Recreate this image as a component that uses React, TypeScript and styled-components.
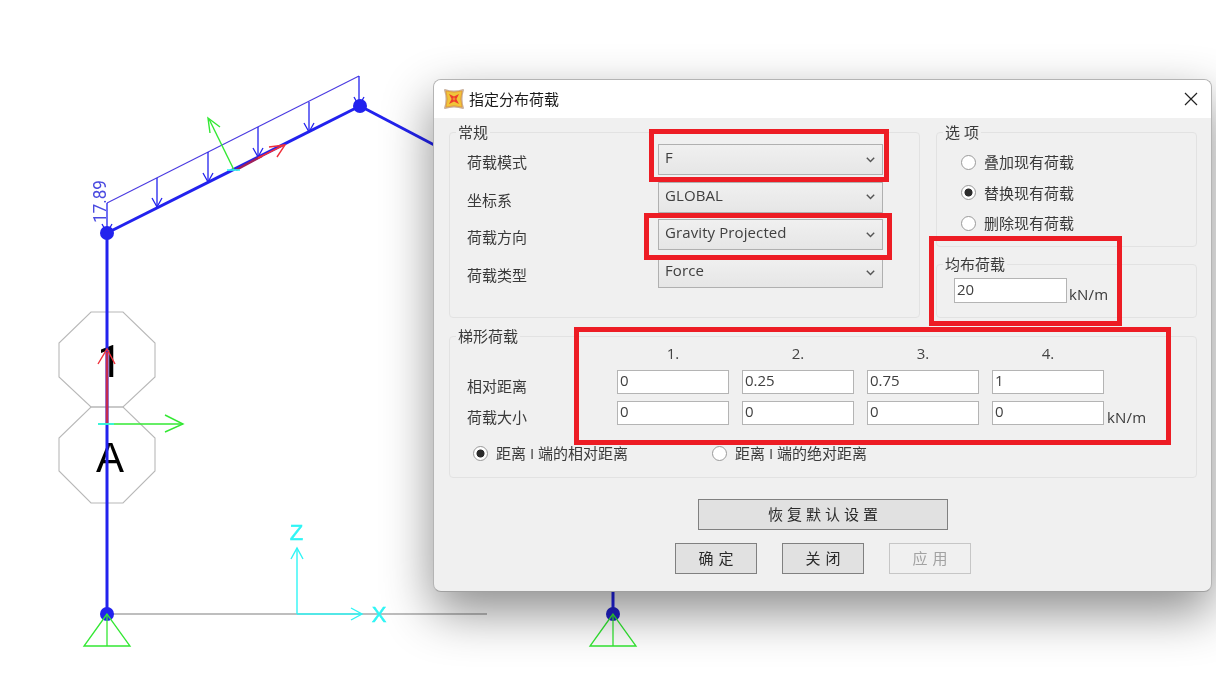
import React from "react";
import styled, { createGlobalStyle } from "styled-components";

const Global = createGlobalStyle`
  html, body { margin: 0; padding: 0; background: #fff; overflow: hidden; }
  * { box-sizing: border-box; }
`;

const Stage = styled.div`
  position: relative;
  width: 1216px;
  height: 675px;
  background: #fff;
  overflow: hidden;
  filter: blur(0.35px);
  font-family: "Open Sans", "Noto Sans CJK SC", sans-serif;
  font-size: 15px;
  color: #3a3a3a;
`;

const Drawing = styled.svg`
  position: absolute;
  inset: 0;
`;

const Dialog = styled.div`
  position: absolute;
  left: 433px;
  top: 79px;
  width: 779px;
  height: 513px;
  display: flex;
  flex-direction: column;
  background: #f0f0f0;
  border: 1px solid #b4b4b4;
  border-bottom-color: #a0a0a0;
  border-radius: 8px;
  overflow: hidden;
  box-shadow: 0 20px 50px rgba(0, 0, 0, 0.45);
`;

const TitleBar = styled.div`
  height: 38px;
  flex: none;
  display: flex;
  align-items: center;
  padding: 0 13px 0 10px;
  background: #fff;
`;

const DialogTitle = styled.span`
  margin: 0 0 2px 5px;
  color: #1a1a1a;
  font-size: 15px;
  flex: 1;
`;

const DialogBody = styled.div`
  flex: 1;
  padding: 14px 14px 0 15px;
  display: flex;
  flex-direction: column;
`;

const TopRow = styled.div`
  display: grid;
  grid-template-columns: 471px 261px;
  column-gap: 16px;
  height: 186px;
`;

const SideColumn = styled.div`
  display: flex;
  flex-direction: column;
  gap: 17px;
`;

const Group = styled.section<{ $height?: number; $grow?: boolean }>`
  border: 1px solid #e2e2e2;
  border-radius: 4px;
  ${(p) => (p.$height ? `height: ${p.$height}px; flex: none;` : "")}
  ${(p) => (p.$grow ? "flex: 1; min-height: 0;" : "")}
`;

const GroupTitle = styled.div`
  width: fit-content;
  height: 20px;
  margin: -11px 0 0 6px;
  padding: 0 2px;
  line-height: 20px;
  background: #f0f0f0;
  color: #3a3a3a;
  white-space: pre;
`;

const ComboGrid = styled.div`
  display: grid;
  grid-template-columns: 191px 225px;
  row-gap: 6.7px;
  padding: 2px 0 0 17px;
`;

const RowLabel = styled.div`
  height: 31px;
  line-height: 37px;
`;

const Combo = styled.div`
  height: 31px;
  display: flex;
  align-items: center;
  justify-content: space-between;
  padding: 0 7px 5px 6px;
  border: 1px solid #b0b0b0;
  background: linear-gradient(180deg, #f0f0f0, #e6e6e6);
  color: #404040;
  line-height: 20px;
  letter-spacing: 0.1px;
`;

const Chevron = styled.svg`
  width: 9px;
  height: 6px;
  margin-top: 5px;
  flex: none;
`;

const RadioList = styled.div`
  display: flex;
  flex-direction: column;
  gap: 10.5px;
  padding: 10px 0 0 24px;
`;

const RadioItem = styled.div<{ $width?: number }>`
  display: flex;
  align-items: center;
  gap: 8px;
  height: 20px;
  line-height: 20px;
  white-space: nowrap;
  ${(p) => (p.$width ? `width: ${p.$width}px;` : "")}
`;

const RadioDot = styled.span<{ $on?: boolean }>`
  width: 15px;
  height: 15px;
  flex: none;
  border-radius: 50%;
  border: 1px solid #9a9a9a;
  background: ${(p) => (p.$on ? "radial-gradient(circle, #2c2c2c 0 3.6px, #fff 4.4px)" : "#fff")};
`;

const UniformRow = styled.div`
  display: flex;
  padding: 4px 0 0 17px;
`;

const Field = styled.input<{ $w?: number; $h?: number }>`
  width: ${(p) => p.$w ?? 112}px;
  height: ${(p) => p.$h ?? 24}px;
  padding: 0 2px 4px;
  margin: 0;
  border: 1px solid #b4b4b4;
  border-radius: 0;
  background: #fff;
  color: #404040;
  font: inherit;
  outline: none;
`;

const Unit = styled.div`
  margin-left: 2px;
  line-height: 32px;
  height: 25px;
  white-space: nowrap;
  letter-spacing: 0.2px;
`;

const GridUnit = styled(Unit)`
  margin-left: -10px;
  height: 24px;
`;

const LowerGroupSpacer = styled.div`
  height: 18px;
  flex: none;
`;

const TrapGrid = styled.div`
  display: grid;
  grid-template-columns: 137px repeat(4, 112px) auto;
  column-gap: 13px;
  row-gap: 7px;
  padding-left: 17px;
`;

const ColumnHead = styled.div`
  height: 14px;
  margin-bottom: 3px;
  line-height: 14px;
  text-align: center;
  color: #444;
`;

const TrapLabel = styled.div`
  height: 24px;
  line-height: 32px;
`;

const RadioRow = styled.div`
  display: flex;
  padding: 18px 0 0 23px;
`;

const Footer = styled.div`
  display: flex;
  flex-direction: column;
  align-items: center;
  padding-top: 21px;
  gap: 13px;
`;

const ButtonRow = styled.div`
  display: flex;
  gap: 25px;
`;

const Button = styled.button<{ $wide?: boolean; $off?: boolean }>`
  width: ${(p) => (p.$wide ? 250 : 82)}px;
  height: 31px;
  padding: 0 0 2px;
  border: 1px solid ${(p) => (p.$off ? "#c6c6c6" : "#808080")};
  border-radius: 0;
  background: ${(p) => (p.$off ? "#f0f0f0" : "#e1e1e1")};
  color: ${(p) => (p.$off ? "#a2a2a2" : "#2a2a2a")};
  font: inherit;
  letter-spacing: ${(p) => (p.$wide ? 4 : 5)}px;
  text-indent: ${(p) => (p.$wide ? 4 : 5)}px;
`;

const Highlight = styled.div<{ $x: number; $y: number; $w: number; $h: number }>`
  position: absolute;
  left: ${(p) => p.$x}px;
  top: ${(p) => p.$y}px;
  width: ${(p) => p.$w}px;
  height: ${(p) => p.$h}px;
  border: 5px solid #ed1c24;
`;

const BLUE = "#2222ee";
const GREEN = "#33e833";
const CYAN = "#2ff5f5";
const RED = "#f0303a";

const LoadArrow = ({ x, top, bottom }: { x: number; top: number; bottom: number }) => (
  <g stroke={BLUE} fill="none" strokeWidth={1.3}>
    <line x1={x} y1={top} x2={x} y2={bottom} />
    <polyline points={`${x - 5},${bottom - 9} ${x},${bottom} ${x + 5},${bottom - 9}`} />
  </g>
);

const Support = ({ x }: { x: number }) => (
  <g stroke={GREEN} fill="none" strokeWidth={1.3}>
    <polygon points={`${x},614 ${x - 23},646 ${x + 23},646`} />
    <line x1={x} y1={614} x2={x} y2={646} />
  </g>
);

const Frame = () => (
  <Drawing width="1216" height="675" viewBox="0 0 1216 675">
    <line x1="107" y1="614" x2="487" y2="614" stroke="#a8a8a8" strokeWidth="1.5" />
    <g fill="none" stroke="#b8b8b8" strokeWidth="1.1">
      <polygon points="91,312 123,312 155,343 155,377 123,407 91,407 59,377 59,343" />
      <polygon points="91,407 123,407 155,438 155,471 123,503 91,503 59,471 59,438" />
    </g>
    <text x="110" y="377" fontFamily="Roboto" fontSize="45" textAnchor="middle" fill="#000">1</text>
    <text x="110" y="472" fontFamily="Liberation Sans" fontSize="42" textAnchor="middle" fill="#000">A</text>

    <g stroke={BLUE} strokeWidth="3" fill="none">
      <line x1="107" y1="233" x2="107" y2="614" />
      <line x1="107" y1="233" x2="360" y2="106" />
      <line x1="360" y1="106" x2="440" y2="148" />
      <line x1="613" y1="590" x2="613" y2="614" />
    </g>
    <line x1="107" y1="203" x2="359" y2="76" stroke="#4a3ae0" strokeWidth="1.1" />
    <LoadArrow x={107} top={203} bottom={233} />
    <LoadArrow x={157} top={178} bottom={207} />
    <LoadArrow x={208} top={152} bottom={182} />
    <LoadArrow x={258} top={127} bottom={157} />
    <LoadArrow x={309} top={102} bottom={132} />
    <LoadArrow x={359} top={76} bottom={106} />
    <text
      transform="translate(105.5 223) rotate(-90)"
      fontFamily="Roboto"
      fontSize="19"
      textLength="43"
      lengthAdjust="spacingAndGlyphs"
      fill="#4a4ae0"
    >
      17.89
    </text>
    <circle cx="107" cy="233" r="7" fill={BLUE} />
    <circle cx="360" cy="106" r="7" fill={BLUE} />
    <circle cx="107" cy="614" r="7" fill={BLUE} />
    <circle cx="613" cy="614" r="7" fill="#2222cc" />

    <line x1="236" y1="170" x2="262" y2="156" stroke="#a0205a" strokeWidth="2.4" />
    <g stroke={RED} strokeWidth="1.4" fill="none">
      <line x1="258" y1="158" x2="284" y2="145" />
      <polyline points="269,147 285,145 277,157" />
    </g>
    <g stroke={GREEN} strokeWidth="1.4" fill="none">
      <line x1="234" y1="170" x2="209" y2="119" />
      <polyline points="210,133 208,118 220,127" />
    </g>
    <line x1="227" y1="170" x2="240" y2="170" stroke={CYAN} strokeWidth="1.6" />

    <line x1="107" y1="424" x2="107" y2="352" stroke="#c42a50" strokeWidth="2.6" />
    <polyline points="98,364 107,349 115,364" stroke={RED} strokeWidth="1.4" fill="none" />
    <g stroke={GREEN} strokeWidth="1.4" fill="none">
      <line x1="98" y1="424" x2="183" y2="424" />
      <polyline points="165,415 183,424 165,432" />
    </g>
    <line x1="98" y1="424" x2="114" y2="424" stroke={CYAN} strokeWidth="1.6" />

    <Support x={107} />
    <Support x={613} />

    <g stroke={CYAN} strokeWidth="1.4" fill="none">
      <line x1="297" y1="614" x2="297" y2="548" />
      <polyline points="291,559 297,548 303,559" />
      <line x1="297" y1="614" x2="362" y2="614" />
      <polyline points="351,608 362,614 351,620" />
    </g>
    <text x="296.5" y="540" fontFamily="Liberation Sans" fontSize="22" textAnchor="middle" fill={CYAN} stroke={CYAN} strokeWidth="0.5">Z</text>
    <text x="379" y="622" fontFamily="Liberation Sans" fontSize="22" textAnchor="middle" fill={CYAN} stroke={CYAN} strokeWidth="0.5">X</text>
  </Drawing>
);

const AppIcon = () => (
  <svg width="20" height="20" viewBox="0 0 20 20">
    <path d="M0 1 Q0 0 1 0 Q10 3 19 0 Q20 0 20 1 Q17 10 20 19 Q20 20 19 20 Q10 17 1 20 Q0 20 0 19 Q3 10 0 1Z" fill="#c9b09c" />
    <path d="M2 2 Q10 4.5 18 2 Q15.5 10 18 18 Q10 15.5 2 18 Q4.5 10 2 2Z" fill="#f0c53a" stroke="#e89a28" strokeWidth="0.8" />
    <path d="M5 5 L10 7.6 L15 5 L12.4 10 L15 15 L10 12.4 L5 15 L7.6 10Z" fill="#ee3c2c" />
    <circle cx="10" cy="10" r="1.4" fill="#f08a30" />
  </svg>
);

const CloseIcon = () => (
  <svg width="14" height="14" viewBox="0 0 14 14">
    <path d="M1 1 L13 13 M13 1 L1 13" stroke="#222" strokeWidth="1.2" fill="none" />
  </svg>
);

const ChevronIcon = () => (
  <Chevron viewBox="0 0 9 6">
    <path d="M0.8 0.8 L4.5 4.6 L8.2 0.8" stroke="#555" strokeWidth="1.4" fill="none" />
  </Chevron>
);

const combos: [string, string][] = [
  ["荷载模式", "F"],
  ["坐标系", "GLOBAL"],
  ["荷载方向", "Gravity Projected"],
  ["荷载类型", "Force"],
];

const options: [string, boolean][] = [
  ["叠加现有荷载", false],
  ["替换现有荷载", true],
  ["删除现有荷载", false],
];

const distances = ["0", "0.25", "0.75", "1"];
const magnitudes = ["0", "0", "0", "0"];

export default function App() {
  return (
    <Stage>
      <Global />
      <Frame />
      <Dialog>
        <TitleBar>
          <AppIcon />
          <DialogTitle>指定分布荷载</DialogTitle>
          <CloseIcon />
        </TitleBar>
        <DialogBody>
          <TopRow>
            <Group>
              <GroupTitle>常规</GroupTitle>
              <ComboGrid>
                {combos.map(([label, value]) => (
                  <React.Fragment key={label}>
                    <RowLabel>{label}</RowLabel>
                    <Combo>
                      {value}
                      <ChevronIcon />
                    </Combo>
                  </React.Fragment>
                ))}
              </ComboGrid>
            </Group>
            <SideColumn>
              <Group $grow>
                <GroupTitle>选 项</GroupTitle>
                <RadioList>
                  {options.map(([text, on]) => (
                    <RadioItem key={text}>
                      <RadioDot $on={on} />
                      {text}
                    </RadioItem>
                  ))}
                </RadioList>
              </Group>
              <Group $height={54}>
                <GroupTitle>均布荷载</GroupTitle>
                <UniformRow>
                  <Field $w={113} $h={25} readOnly value="20" />
                  <Unit>kN/m</Unit>
                </UniformRow>
              </Group>
            </SideColumn>
          </TopRow>
          <LowerGroupSpacer />
          <Group $height={142}>
            <GroupTitle>梯形荷载</GroupTitle>
            <TrapGrid>
              <span />
              {["1.", "2.", "3.", "4."].map((h) => (
                <ColumnHead key={h}>{h}</ColumnHead>
              ))}
              <span />
              <TrapLabel>相对距离</TrapLabel>
              {distances.map((v, i) => (
                <Field key={i} readOnly value={v} />
              ))}
              <span />
              <TrapLabel>荷载大小</TrapLabel>
              {magnitudes.map((v, i) => (
                <Field key={i} readOnly value={v} />
              ))}
              <GridUnit>kN/m</GridUnit>
            </TrapGrid>
            <RadioRow>
              <RadioItem $width={239}>
                <RadioDot $on />
                距离 I 端的相对距离
              </RadioItem>
              <RadioItem>
                <RadioDot />
                距离 I 端的绝对距离
              </RadioItem>
            </RadioRow>
          </Group>
          <Footer>
            <Button $wide>恢复默认设置</Button>
            <ButtonRow>
              <Button>确定</Button>
              <Button>关闭</Button>
              <Button $off>应用</Button>
            </ButtonRow>
          </Footer>
        </DialogBody>
      </Dialog>
      <Highlight $x={649} $y={129} $w={240} $h={53} />
      <Highlight $x={644} $y={213} $w={248} $h={47} />
      <Highlight $x={929} $y={236} $w={193} $h={90} />
      <Highlight $x={574} $y={327} $w={597} $h={118} />
    </Stage>
  );
}
